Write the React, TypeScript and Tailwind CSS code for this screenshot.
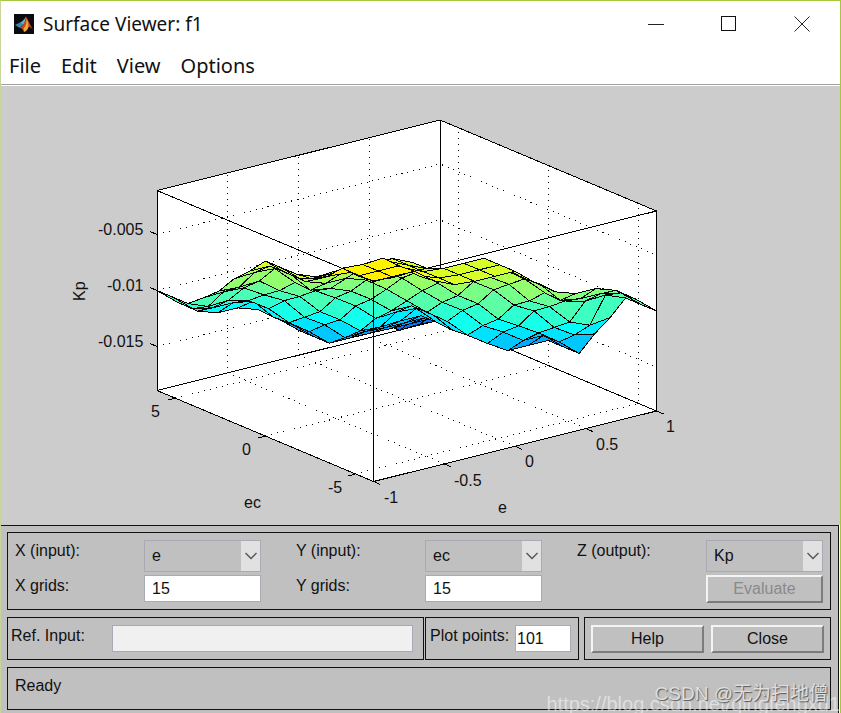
import React from "react";

const N = 15;
const SETS = [-3, -2, -1, 0, 1, 2, 3];

// Fuzzy rule base for Kp: rows follow e, columns follow ec (NB ... PB).
const RULES = [
  [3, 3, 2, 2, 1, 0, 0],
  [3, 3, 2, 1, 1, 0, -1],
  [2, 2, 2, 1, 0, -1, -1],
  [2, 2, 1, 0, -1, -2, -2],
  [1, 1, 0, -1, -1, -2, -2],
  [1, 0, -1, -2, -2, -2, -3],
  [0, 0, -2, -2, -2, -3, -3],
];

const tri = (x: number, c: number) => Math.max(0, 1 - Math.abs(x - c));

// Mamdani inference: min, max, centroid.
function infer(x: number, y: number) {
  const strength = SETS.map(() => 0);
  RULES.forEach((row, a) =>
    row.forEach((out, b) => {
      const w = Math.min(tri(x, SETS[a]), tri(y, SETS[b]));
      strength[out + 3] = Math.max(strength[out + 3], w);
    }),
  );
  let num = 0;
  let den = 0;
  for (let k = 0; k <= 100; k++) {
    const u = -3 + (6 * k) / 100;
    const m = Math.max(...SETS.map((c, s) => Math.min(strength[s], tri(u, c))));
    num += m * u;
    den += m;
  }
  return num / den;
}

const height = Array.from({ length: N }, (_, i) =>
  Array.from({ length: N }, (_, j) => 100 + 37.5 * infer(-3 + (6 * i) / 14, -3 + (6 * j) / 14)),
);

type P = [number, number];

// e and ec as fractions of their axes, h in drawing units above the floor.
const project = (e: number, ec: number, h: number): P => [
  373.5 + 283 * e - 216.5 * ec,
  481.5 - 70.5 * e - 91 * ec - h,
];

function jet(h: number) {
  const t = 0.42 + (h - 100) * 0.0022;
  const ch = (c: number) => Math.round(255 * Math.min(1, Math.max(0, 1.5 - Math.abs(4 * t - c))));
  return `rgb(${ch(3)},${ch(2)},${ch(1)})`;
}

const pts = (list: P[]) => list.map(([x, y]) => `${x.toFixed(1)},${y.toFixed(1)}`).join(" ");

const facets: { points: string; fill: string }[] = [];
for (let i = N - 2; i >= 0; i--) {
  for (let j = N - 2; j >= 0; j--) {
    const at = (a: number, b: number) => project(a / 14, b / 14, height[a][b]);
    facets.push({
      points: pts([at(i, j), at(i + 1, j), at(i + 1, j + 1), at(i, j + 1)]),
      fill: jet(height[i][j]),
    });
  }
}

const E_TICKS = [0.25, 0.5, 0.75];
const EC_TICKS = [1 / 12, 0.5, 11 / 12];
const Z_TICKS = [44, 100, 156];

const gridLines: P[][] = [
  ...E_TICKS.map((f) => [project(f, 0, 0), project(f, 1, 0), project(f, 1, 200)]),
  ...EC_TICKS.map((f) => [project(0, f, 0), project(1, f, 0), project(1, f, 200)]),
  ...Z_TICKS.map((h) => [project(0, 1, h), project(1, 1, h), project(1, 0, h)]),
];

const tick = ([x, y]: P, dx: number, dy: number): P[] => [[x, y], [x + dx, y + dy]];
const ticks: P[][] = [
  ...[0, ...E_TICKS, 1].map((f) => tick(project(f, 0, 0), 7, 3)),
  ...EC_TICKS.map((f) => tick(project(0, f, 0), -7, 2)),
  ...Z_TICKS.map((h) => tick(project(0, 1, h), -7, -3)),
];

const LABELS: [number, number, string][] = [
  [98, 235, "-0.005"],
  [107, 291, "-0.01"],
  [98, 347, "-0.015"],
  [151, 417, "5"],
  [242, 455, "0"],
  [328, 493, "-5"],
  [244, 508, "ec"],
  [384, 503, "-1"],
  [454, 486, "-0.5"],
  [525, 467, "0"],
  [596, 450, "0.5"],
  [666, 432, "1"],
  [498, 513, "e"],
];

function Plot() {
  return (
    <svg viewBox="1 86 839 439" className="block h-auto w-full bg-[#cccccc]" role="img" aria-label="Surface of Kp over e and ec">
      <g shapeRendering="crispEdges" fill="none" stroke="#000">
        <polygon
          points={pts([project(0, 0, 0), project(1, 0, 0), project(1, 0, 200), project(1, 1, 200), project(0, 1, 200), project(0, 1, 0)])}
          fill="#fff"
        />
        {gridLines.map((l, k) => (
          <polyline key={k} points={pts(l)} strokeDasharray="1 5" />
        ))}
        <polyline points={pts([project(0, 1, 0), project(1, 1, 0), project(1, 0, 0)])} />
        <polyline points={pts([project(1, 1, 0), project(1, 1, 200)])} />
        {facets.map((f, k) => (
          <polygon key={k} points={f.points} fill={f.fill} strokeLinejoin="round" />
        ))}
        <polyline points={pts([project(0, 1, 200), project(0, 0, 200), project(1, 0, 200)])} />
        <polyline points={pts([project(0, 0, 200), project(0, 0, 0)])} />
        {ticks.map((l, k) => (
          <polyline key={k} points={pts(l)} />
        ))}
      </g>
      <g fontSize="16" fill="#111">
        {LABELS.map(([x, y, t]) => (
          <text key={`${x}-${y}`} x={x} y={y}>
            {t}
          </text>
        ))}
        <text transform="translate(85 301) rotate(-90)">Kp</text>
      </g>
    </svg>
  );
}

function Logo() {
  return (
    <svg width="20" height="20" viewBox="0 0 20 20" aria-hidden="true">
      <rect width="20" height="20" fill="#0b0b0d" />
      <path d="M1 11 L6 8.5 L9 11 L6 14 Z" fill="#3f86a8" />
      <path d="M6 8.5 Q9 7.500 12 2.500 L11 9 L9 11 Z" fill="#5fb0c8" />
      <path d="M12 2.500 Q11 10 6 14 Q8.500 14 10 18 Q13 17 15 12.500 Q17 13 19 16 Q15 8 12 2.500Z" fill="#c4461f" />
      <path d="M12.500 4 Q13 11 9.500 14.500 L10 18 Q13 17 14.500 12.500 Q14.500 8 12.500 4Z" fill="#f6a53a" />
    </svg>
  );
}

const field = "h-[27px] rounded-none border border-[#aaaab4] outline-none";
const raised =
  "h-7 border-t-2 border-l-2 border-r-2 border-b-2 border-t-[#f4f4f4] border-l-[#f4f4f4] border-r-[#7c7c7c] border-b-[#7c7c7c] bg-[#c0c0c0] leading-none";
const box = "border border-[#111]";

function Picker({ id, value }: { id: string; value: string }) {
  return (
    <div className="relative h-8 w-[117px]">
      <select id={id} defaultValue={value} className="h-8 w-full appearance-none rounded-none border border-[#aaaab4] bg-[#c0c0c0] pl-[7px] outline-none">
        <option>{value}</option>
      </select>
      <span className="pointer-events-none absolute top-px right-px flex h-[30px] w-[19px] items-center justify-center bg-[#e1e1e1]">
        <svg width="12" height="8" viewBox="0 0 12 8" fill="none" stroke="#555" strokeWidth="1.4">
          <path d="M0.500 1 L6 6.500 L11.500 1" />
        </svg>
      </span>
    </div>
  );
}

function Axis({ name, value, prefix, last }: { name: string; value: string; prefix: string; last?: boolean }) {
  return (
    <div className="grid grid-cols-[129px_117px] gap-y-[3px]">
      <label htmlFor={`${prefix}-var`} className="pt-[2px] leading-[18px]">
        {name}
      </label>
      <Picker id={`${prefix}-var`} value={value} />
      {last ? (
        <button disabled className={`${raised} col-start-2 text-[#8a8a8a]`}>
          Evaluate
        </button>
      ) : (
        <>
          <label htmlFor={`${prefix}-grids`} className="pt-[2px] leading-[18px]">
            {prefix} grids:
          </label>
          <input id={`${prefix}-grids`} defaultValue="15" className={`${field} w-full bg-white pl-[7px]`} />
        </>
      )}
    </div>
  );
}

export default function App() {
  return (
    <div className="relative overflow-hidden border-t border-r border-l border-t-[#a5c83c] border-r-[#a5c83c] border-l-[#c6d69a] bg-white font-['Liberation_Sans',Arial,sans-serif] text-base text-[#111]">
      <header className="flex h-[46px] items-center pr-[2px] pl-[13px]">
        <Logo />
        <h1 className="ml-[9px] flex-1 font-['Noto_Sans',sans-serif] text-[19px]">Surface Viewer: f1</h1>
        <button aria-label="Minimize" className="flex w-[73px] justify-center">
          <svg width="16" height="16" viewBox="0 0 16 16" stroke="#222">
            <path d="M0 8.500H16" />
          </svg>
        </button>
        <button aria-label="Maximize" className="flex w-[73px] justify-center">
          <svg width="16" height="16" viewBox="0 0 16 16" stroke="#111" fill="none">
            <rect x="0.500" y="0.500" width="14" height="14" />
          </svg>
        </button>
        <button aria-label="Close window" className="flex w-[73px] justify-center">
          <svg width="16" height="16" viewBox="0 0 16 16" stroke="#222" fill="none">
            <path d="M0.500 0.500L15.500 15.500M15.500 0.500L0.500 15.500" />
          </svg>
        </button>
      </header>
      <nav className="flex h-[37px] items-center gap-5 pl-2 font-['Noto_Sans',sans-serif] text-[20px]">
        <button>File</button>
        <button>Edit</button>
        <button>View</button>
        <button>Options</button>
      </nav>
      <main className="border-t border-[#a0a0a0] pt-px">
        <Plot />
        <section className="mr-px flex flex-col gap-[7px] border-t border-r border-[#111] bg-[#c0c0c0] pt-[6px] pr-[7px] pb-[3px] pl-[6px]">
          <div className={`${box} flex h-[78px] items-start justify-between px-[7px] pt-[7px]`}>
            <Axis prefix="X" name="X (input):" value="e" />
            <Axis prefix="Y" name="Y (input):" value="ec" />
            <Axis prefix="Z" name="Z (output):" value="Kp" last />
          </div>
          <div className="flex h-[43px]">
            <div className={`${box} mr-px flex flex-1 items-center pr-[10px] pl-[3px]`}>
              <label htmlFor="ref" className="w-[101px] pb-[6px]">
                Ref. Input:
              </label>
              <input id="ref" disabled className={`${field} min-w-0 flex-1 bg-[#f0f0f0]`} />
            </div>
            <div className={`${box} mr-[5px] flex w-[154px] items-center pl-1`}>
              <label htmlFor="points" className="w-[85px] pb-[6px] whitespace-nowrap">
                Plot points:
              </label>
              <input id="points" defaultValue="101" className={`${field} w-14 bg-white pl-px`} />
            </div>
            <div className={`${box} flex w-[247px] items-center gap-[7px] px-[6px]`}>
              <button className={`${raised} flex-1`}>Help</button>
              <button className={`${raised} flex-1`}>Close</button>
            </div>
          </div>
          <div className={`${box} h-[43px] px-[7px] pt-[6px]`}>
            <p role="status">Ready</p>
          </div>
        </section>
      </main>
      <span className="pointer-events-none absolute right-0 -bottom-[3px] text-xl leading-6 whitespace-nowrap text-white/50">
        https://blog.csdn.net/qingfengxd1
      </span>
      <span className="pointer-events-none absolute right-3 bottom-[5px] font-['Liberation_Sans','Noto_Sans_CJK_SC',sans-serif] text-[19px] leading-7 whitespace-nowrap text-[#dedede] [text-shadow:1px_1px_1px_#555]">
        CSDN @无为扫地僧
      </span>
    </div>
  );
}
